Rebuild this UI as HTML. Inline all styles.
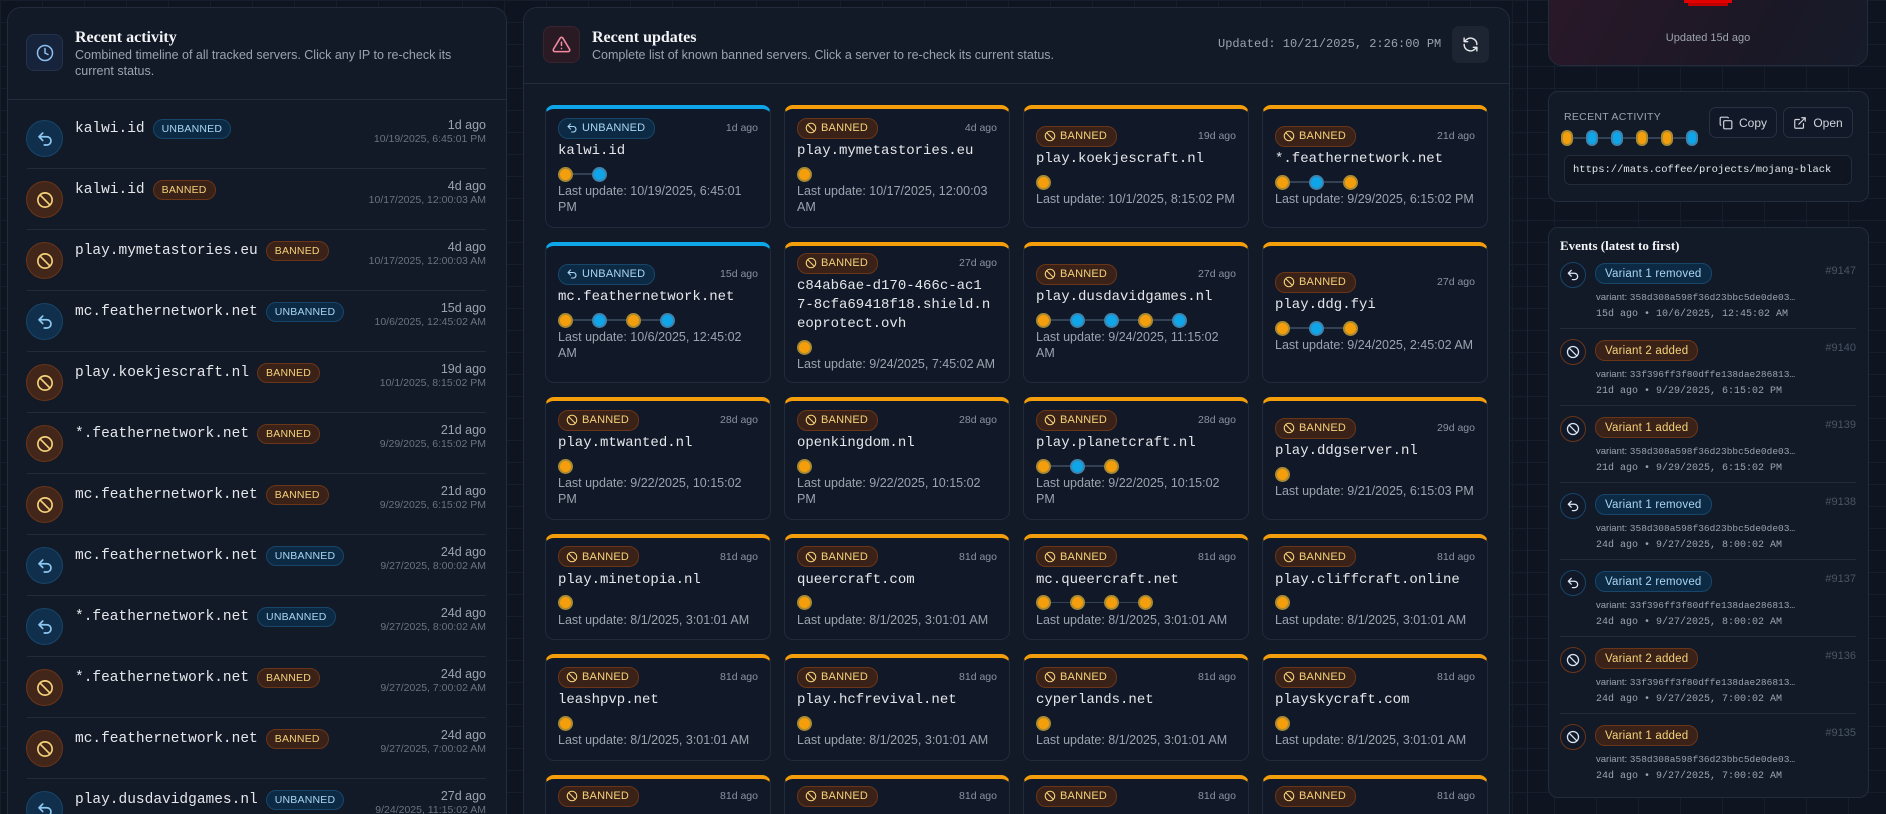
<!DOCTYPE html>
<html><head><meta charset="utf-8"><style>
*{box-sizing:border-box;margin:0;padding:0}
html{overflow:hidden;height:814px;width:1886px;background:#0e1420}
body{width:1886px;height:814px;overflow:hidden;background:#0e1420;font-family:"Liberation Sans","DejaVu Sans",sans-serif;color:#e5e7eb;position:relative;
background-image:linear-gradient(#161e2b 1px,transparent 1px),linear-gradient(90deg,#161e2b 1px,transparent 1px);background-size:42px 22px}
.panel{position:absolute;background:#121927;border:1px solid #232c3c;border-radius:14px}
.mono{font-family:"Liberation Mono","DejaVu Sans Mono",monospace}
.serif{font-family:"Liberation Serif","DejaVu Serif",serif;font-weight:bold}
.hbox{position:absolute;width:37px;height:37px;border-radius:8px;display:flex;align-items:center;justify-content:center}
.htitle{position:absolute;font-size:16px;color:#f3f4f6}
.hdesc{position:absolute;font-size:12.5px;color:#9ca3af;line-height:16px}
.lrow{position:absolute;left:27px;width:459px;height:61px;border-bottom:1px solid #222b3b}
.lrow .ic{position:absolute;left:-1px;top:12px;width:37px;height:37px;border-radius:50%;display:flex;align-items:center;justify-content:center}
.ic.u{background:#0f2f4c;border:1px solid #17466a}
.ic.b{background:#42261a;border:1px solid #6b3518}
.lrow .nm{position:absolute;left:48px;top:11px;font-size:14.5px;color:#e5e7eb;display:flex;align-items:center;white-space:nowrap}
.pill{display:inline-flex;align-items:center;height:20px;padding:0 8px;border-radius:10px;font-size:10.5px;margin-left:8px;letter-spacing:.2px;font-family:"Liberation Sans",sans-serif}
.pill.u{background:#0c2a44;border:1px solid #17466a;color:#a9d6f5}
.pill.b{background:#3a2218;border:1px solid #6b3518;color:#f5d27a}
.lrow .tm{position:absolute;right:0;top:10px;text-align:right}
.tm .a{font-size:12.5px;color:#9ca3af;line-height:15px}
.tm .d{font-size:10.5px;color:#6b7280;line-height:13px}
.grid{position:absolute;left:545px;top:105px;width:944px;display:grid;grid-template-columns:repeat(4,226px);column-gap:13px;row-gap:14px;grid-template-rows:123px 141px 123px 106px 107px 60px}
.card{background:#111827;border:1px solid #222b3b;border-top:4px solid #f59e0b;border-radius:9px;padding:4px 12px 8px;display:flex;flex-direction:column;justify-content:center;position:relative;overflow:hidden}
.card.u{border-top-color:#0ea5e9}
.card .top{display:flex;justify-content:space-between;align-items:center;height:22px}
.card .top .pill{margin-left:0;font-size:11px;padding:0 9px 0 7px;gap:4px;height:21px}
.card .ago{font-size:10.5px;color:#8b93a1}
.card .nm{font-size:14px;color:#e5e7eb;margin-top:3px;line-height:19px;white-space:nowrap}
.dots{display:flex;align-items:center;height:16px;margin-top:5px}
.dot{width:15px;height:15px;border-radius:50%;border:2px solid #a88a35;background:#f59e0b}
.dot.bl{border-color:#3f83ad;background:#0ea5e9}
.ln{width:19px;height:1.5px;background:#334155}
.card .lu{font-size:12.5px;color:#9ca3af;line-height:16px;margin-top:1px;white-space:nowrap}
.ev{position:absolute;left:1560px;width:296px;height:77px;border-bottom:1px solid #222b3b}
.ev .ic{position:absolute;left:0;top:10px;width:26px;height:26px;border-radius:50%;display:flex;align-items:center;justify-content:center;background:#111827}
.ev .ic.u{border:1px solid #17466a;background:#111827}
.ev .ic.b{border:1px solid #6b3518;background:#111827}
.ev .pl{position:absolute;left:35px;top:11px}
.ev .pl .pill{margin:0;font-size:11.5px;height:21px;padding:0 9px}
.ev .no{position:absolute;right:0;top:13px;font-size:11px;color:#4b5563}
.ev .v{position:absolute;left:36px;top:40px;font-size:9.5px;color:#9ca3af;white-space:nowrap}
.ev .t{position:absolute;left:36px;top:57px;font-size:10px;color:#9ca3af;white-space:nowrap}
</style></head><body>

<div class="panel" style="left:7px;top:7px;width:500px;height:900px"></div>
<div class="hbox" style="left:26px;top:34px;background:#17233a;border:1px solid #24324c">
<svg width="18" height="18" viewBox="0 0 24 24" fill="none" stroke="#8cc0f0" stroke-width="2" stroke-linecap="round"><circle cx="12" cy="12" r="10"/><path d="M12 6v6l4 2"/></svg></div>
<div class="htitle serif" style="left:75px;top:29px">Recent activity</div>
<div class="hdesc" style="left:75px;top:47px">Combined timeline of all tracked servers. Click any IP to re-check its<br>current status.</div>
<div style="position:absolute;left:7px;top:99px;width:500px;height:1px;background:#232c3c"></div>

<svg width="0" height="0" style="position:absolute"><defs>
<symbol id="undo" viewBox="0 0 24 24"><path d="M9 14 4 9l5-5M4 9h10.5a5.5 5.5 0 0 1 0 11H11" fill="none" stroke="currentColor" stroke-width="2.2" stroke-linecap="round" stroke-linejoin="round"/></symbol>
<symbol id="ban" viewBox="0 0 24 24"><circle cx="12" cy="12" r="9.5" fill="none" stroke="currentColor" stroke-width="2.2"/><path d="M5.3 5.3l13.4 13.4" stroke="currentColor" stroke-width="2.2"/></symbol>
</defs></svg>

<div class="lrow" style="top:108px"><div class="ic u"><svg width="18" height="18" style="color:#8cc8f0"><use href="#undo"/></svg></div><div class="nm mono">kalwi.id<span class="pill u">UNBANNED</span></div><div class="tm"><div class="a">1d ago</div><div class="d">10/19/2025, 6:45:01 PM</div></div></div>
<div class="lrow" style="top:169px"><div class="ic b"><svg width="18" height="18" style="color:#f5d27a"><use href="#ban"/></svg></div><div class="nm mono">kalwi.id<span class="pill b">BANNED</span></div><div class="tm"><div class="a">4d ago</div><div class="d">10/17/2025, 12:00:03 AM</div></div></div>
<div class="lrow" style="top:230px"><div class="ic b"><svg width="18" height="18" style="color:#f5d27a"><use href="#ban"/></svg></div><div class="nm mono">play.mymetastories.eu<span class="pill b">BANNED</span></div><div class="tm"><div class="a">4d ago</div><div class="d">10/17/2025, 12:00:03 AM</div></div></div>
<div class="lrow" style="top:291px"><div class="ic u"><svg width="18" height="18" style="color:#8cc8f0"><use href="#undo"/></svg></div><div class="nm mono">mc.feathernetwork.net<span class="pill u">UNBANNED</span></div><div class="tm"><div class="a">15d ago</div><div class="d">10/6/2025, 12:45:02 AM</div></div></div>
<div class="lrow" style="top:352px"><div class="ic b"><svg width="18" height="18" style="color:#f5d27a"><use href="#ban"/></svg></div><div class="nm mono">play.koekjescraft.nl<span class="pill b">BANNED</span></div><div class="tm"><div class="a">19d ago</div><div class="d">10/1/2025, 8:15:02 PM</div></div></div>
<div class="lrow" style="top:413px"><div class="ic b"><svg width="18" height="18" style="color:#f5d27a"><use href="#ban"/></svg></div><div class="nm mono">*.feathernetwork.net<span class="pill b">BANNED</span></div><div class="tm"><div class="a">21d ago</div><div class="d">9/29/2025, 6:15:02 PM</div></div></div>
<div class="lrow" style="top:474px"><div class="ic b"><svg width="18" height="18" style="color:#f5d27a"><use href="#ban"/></svg></div><div class="nm mono">mc.feathernetwork.net<span class="pill b">BANNED</span></div><div class="tm"><div class="a">21d ago</div><div class="d">9/29/2025, 6:15:02 PM</div></div></div>
<div class="lrow" style="top:535px"><div class="ic u"><svg width="18" height="18" style="color:#8cc8f0"><use href="#undo"/></svg></div><div class="nm mono">mc.feathernetwork.net<span class="pill u">UNBANNED</span></div><div class="tm"><div class="a">24d ago</div><div class="d">9/27/2025, 8:00:02 AM</div></div></div>
<div class="lrow" style="top:596px"><div class="ic u"><svg width="18" height="18" style="color:#8cc8f0"><use href="#undo"/></svg></div><div class="nm mono">*.feathernetwork.net<span class="pill u">UNBANNED</span></div><div class="tm"><div class="a">24d ago</div><div class="d">9/27/2025, 8:00:02 AM</div></div></div>
<div class="lrow" style="top:657px"><div class="ic b"><svg width="18" height="18" style="color:#f5d27a"><use href="#ban"/></svg></div><div class="nm mono">*.feathernetwork.net<span class="pill b">BANNED</span></div><div class="tm"><div class="a">24d ago</div><div class="d">9/27/2025, 7:00:02 AM</div></div></div>
<div class="lrow" style="top:718px"><div class="ic b"><svg width="18" height="18" style="color:#f5d27a"><use href="#ban"/></svg></div><div class="nm mono">mc.feathernetwork.net<span class="pill b">BANNED</span></div><div class="tm"><div class="a">24d ago</div><div class="d">9/27/2025, 7:00:02 AM</div></div></div>
<div class="lrow" style="top:779px;border-bottom:none"><div class="ic u"><svg width="18" height="18" style="color:#8cc8f0"><use href="#undo"/></svg></div><div class="nm mono">play.dusdavidgames.nl<span class="pill u">UNBANNED</span></div><div class="tm"><div class="a">27d ago</div><div class="d">9/24/2025, 11:15:02 AM</div></div></div>

<div class="panel" style="left:523px;top:7px;width:987px;height:900px"></div>
<div class="hbox" style="left:543px;top:26px;background:#2a1a24;border:1px solid #3a2430">
<svg width="19" height="19" viewBox="0 0 24 24" fill="none" stroke="#f38ba0" stroke-width="2" stroke-linecap="round" stroke-linejoin="round"><path d="M10.3 3.9 1.8 18a2 2 0 0 0 1.7 3h17a2 2 0 0 0 1.7-3L13.7 3.9a2 2 0 0 0-3.4 0z"/><path d="M12 9v4M12 17h.01"/></svg></div>
<div class="htitle serif" style="left:592px;top:29px">Recent updates</div>
<div class="hdesc" style="left:592px;top:47px">Complete list of known banned servers. Click a server to re-check its current status.</div>
<div class="mono" style="position:absolute;left:1218px;top:37px;font-size:12px;color:#9ca3af">Updated: 10/21/2025, 2:26:00 PM</div>
<div style="position:absolute;left:1452px;top:26px;width:37px;height:37px;border-radius:7px;background:#1d2533;display:flex;align-items:center;justify-content:center">
<svg width="17" height="17" viewBox="0 0 24 24" fill="none" stroke="#e5e7eb" stroke-width="2" stroke-linecap="round" stroke-linejoin="round"><path d="M21 12a9 9 0 0 0-15-6.7L3 8M3 3v5h5M3 12a9 9 0 0 0 15 6.7l3-2.7M21 21v-5h-5"/></svg></div>
<div style="position:absolute;left:523px;top:83px;width:987px;height:1px;background:#232c3c"></div>

<div class="grid">
<div class="card u"><div class="top"><span class="pill u"><svg width="12" height="12" style="color:#a9d6f5"><use href="#undo"/></svg>UNBANNED</span><span class="ago">1d ago</span></div><div class="nm mono">kalwi.id</div><div class="dots"><span class="dot"></span><span class="ln"></span><span class="dot bl"></span></div><div class="lu">Last update: 10/19/2025, 6:45:01<br>PM</div></div>
<div class="card"><div class="top"><span class="pill b"><svg width="12" height="12" style="color:#f5d27a"><use href="#ban"/></svg>BANNED</span><span class="ago">4d ago</span></div><div class="nm mono">play.mymetastories.eu</div><div class="dots"><span class="dot"></span></div><div class="lu">Last update: 10/17/2025, 12:00:03<br>AM</div></div>
<div class="card"><div class="top"><span class="pill b"><svg width="12" height="12" style="color:#f5d27a"><use href="#ban"/></svg>BANNED</span><span class="ago">19d ago</span></div><div class="nm mono">play.koekjescraft.nl</div><div class="dots"><span class="dot"></span></div><div class="lu">Last update: 10/1/2025, 8:15:02 PM</div></div>
<div class="card"><div class="top"><span class="pill b"><svg width="12" height="12" style="color:#f5d27a"><use href="#ban"/></svg>BANNED</span><span class="ago">21d ago</span></div><div class="nm mono">*.feathernetwork.net</div><div class="dots"><span class="dot"></span><span class="ln"></span><span class="dot bl"></span><span class="ln"></span><span class="dot"></span></div><div class="lu">Last update: 9/29/2025, 6:15:02 PM</div></div>
<div class="card u"><div class="top"><span class="pill u"><svg width="12" height="12" style="color:#a9d6f5"><use href="#undo"/></svg>UNBANNED</span><span class="ago">15d ago</span></div><div class="nm mono">mc.feathernetwork.net</div><div class="dots"><span class="dot"></span><span class="ln"></span><span class="dot bl"></span><span class="ln"></span><span class="dot"></span><span class="ln"></span><span class="dot bl"></span></div><div class="lu">Last update: 10/6/2025, 12:45:02<br>AM</div></div>
<div class="card"><div class="top"><span class="pill b"><svg width="12" height="12" style="color:#f5d27a"><use href="#ban"/></svg>BANNED</span><span class="ago">27d ago</span></div><div class="nm mono">c84ab6ae-d170-466c-ac1<br>7-8cfa69418f18.shield.n<br>eoprotect.ovh</div><div class="dots"><span class="dot"></span></div><div class="lu">Last update: 9/24/2025, 7:45:02 AM</div></div>
<div class="card"><div class="top"><span class="pill b"><svg width="12" height="12" style="color:#f5d27a"><use href="#ban"/></svg>BANNED</span><span class="ago">27d ago</span></div><div class="nm mono">play.dusdavidgames.nl</div><div class="dots"><span class="dot"></span><span class="ln"></span><span class="dot bl"></span><span class="ln"></span><span class="dot bl"></span><span class="ln"></span><span class="dot"></span><span class="ln"></span><span class="dot bl"></span></div><div class="lu">Last update: 9/24/2025, 11:15:02<br>AM</div></div>
<div class="card"><div class="top"><span class="pill b"><svg width="12" height="12" style="color:#f5d27a"><use href="#ban"/></svg>BANNED</span><span class="ago">27d ago</span></div><div class="nm mono">play.ddg.fyi</div><div class="dots"><span class="dot"></span><span class="ln"></span><span class="dot bl"></span><span class="ln"></span><span class="dot"></span></div><div class="lu">Last update: 9/24/2025, 2:45:02 AM</div></div>
<div class="card"><div class="top"><span class="pill b"><svg width="12" height="12" style="color:#f5d27a"><use href="#ban"/></svg>BANNED</span><span class="ago">28d ago</span></div><div class="nm mono">play.mtwanted.nl</div><div class="dots"><span class="dot"></span></div><div class="lu">Last update: 9/22/2025, 10:15:02<br>PM</div></div>
<div class="card"><div class="top"><span class="pill b"><svg width="12" height="12" style="color:#f5d27a"><use href="#ban"/></svg>BANNED</span><span class="ago">28d ago</span></div><div class="nm mono">openkingdom.nl</div><div class="dots"><span class="dot"></span></div><div class="lu">Last update: 9/22/2025, 10:15:02<br>PM</div></div>
<div class="card"><div class="top"><span class="pill b"><svg width="12" height="12" style="color:#f5d27a"><use href="#ban"/></svg>BANNED</span><span class="ago">28d ago</span></div><div class="nm mono">play.planetcraft.nl</div><div class="dots"><span class="dot"></span><span class="ln"></span><span class="dot bl"></span><span class="ln"></span><span class="dot"></span></div><div class="lu">Last update: 9/22/2025, 10:15:02<br>PM</div></div>
<div class="card"><div class="top"><span class="pill b"><svg width="12" height="12" style="color:#f5d27a"><use href="#ban"/></svg>BANNED</span><span class="ago">29d ago</span></div><div class="nm mono">play.ddgserver.nl</div><div class="dots"><span class="dot"></span></div><div class="lu">Last update: 9/21/2025, 6:15:03 PM</div></div>
<div class="card"><div class="top"><span class="pill b"><svg width="12" height="12" style="color:#f5d27a"><use href="#ban"/></svg>BANNED</span><span class="ago">81d ago</span></div><div class="nm mono">play.minetopia.nl</div><div class="dots"><span class="dot"></span></div><div class="lu">Last update: 8/1/2025, 3:01:01 AM</div></div>
<div class="card"><div class="top"><span class="pill b"><svg width="12" height="12" style="color:#f5d27a"><use href="#ban"/></svg>BANNED</span><span class="ago">81d ago</span></div><div class="nm mono">queercraft.com</div><div class="dots"><span class="dot"></span></div><div class="lu">Last update: 8/1/2025, 3:01:01 AM</div></div>
<div class="card"><div class="top"><span class="pill b"><svg width="12" height="12" style="color:#f5d27a"><use href="#ban"/></svg>BANNED</span><span class="ago">81d ago</span></div><div class="nm mono">mc.queercraft.net</div><div class="dots"><span class="dot"></span><span class="ln"></span><span class="dot"></span><span class="ln"></span><span class="dot"></span><span class="ln"></span><span class="dot"></span></div><div class="lu">Last update: 8/1/2025, 3:01:01 AM</div></div>
<div class="card"><div class="top"><span class="pill b"><svg width="12" height="12" style="color:#f5d27a"><use href="#ban"/></svg>BANNED</span><span class="ago">81d ago</span></div><div class="nm mono">play.cliffcraft.online</div><div class="dots"><span class="dot"></span></div><div class="lu">Last update: 8/1/2025, 3:01:01 AM</div></div>
<div class="card"><div class="top"><span class="pill b"><svg width="12" height="12" style="color:#f5d27a"><use href="#ban"/></svg>BANNED</span><span class="ago">81d ago</span></div><div class="nm mono">leashpvp.net</div><div class="dots"><span class="dot"></span></div><div class="lu">Last update: 8/1/2025, 3:01:01 AM</div></div>
<div class="card"><div class="top"><span class="pill b"><svg width="12" height="12" style="color:#f5d27a"><use href="#ban"/></svg>BANNED</span><span class="ago">81d ago</span></div><div class="nm mono">play.hcfrevival.net</div><div class="dots"><span class="dot"></span></div><div class="lu">Last update: 8/1/2025, 3:01:01 AM</div></div>
<div class="card"><div class="top"><span class="pill b"><svg width="12" height="12" style="color:#f5d27a"><use href="#ban"/></svg>BANNED</span><span class="ago">81d ago</span></div><div class="nm mono">cyperlands.net</div><div class="dots"><span class="dot"></span></div><div class="lu">Last update: 8/1/2025, 3:01:01 AM</div></div>
<div class="card"><div class="top"><span class="pill b"><svg width="12" height="12" style="color:#f5d27a"><use href="#ban"/></svg>BANNED</span><span class="ago">81d ago</span></div><div class="nm mono">playskycraft.com</div><div class="dots"><span class="dot"></span></div><div class="lu">Last update: 8/1/2025, 3:01:01 AM</div></div>
<div class="card" style="justify-content:flex-start;padding-top:6px"><div class="top"><span class="pill b"><svg width="12" height="12" style="color:#f5d27a"><use href="#ban"/></svg>BANNED</span><span class="ago">81d ago</span></div></div>
<div class="card" style="justify-content:flex-start;padding-top:6px"><div class="top"><span class="pill b"><svg width="12" height="12" style="color:#f5d27a"><use href="#ban"/></svg>BANNED</span><span class="ago">81d ago</span></div></div>
<div class="card" style="justify-content:flex-start;padding-top:6px"><div class="top"><span class="pill b"><svg width="12" height="12" style="color:#f5d27a"><use href="#ban"/></svg>BANNED</span><span class="ago">81d ago</span></div></div>
<div class="card" style="justify-content:flex-start;padding-top:6px"><div class="top"><span class="pill b"><svg width="12" height="12" style="color:#f5d27a"><use href="#ban"/></svg>BANNED</span><span class="ago">81d ago</span></div></div>
</div>

<div style="position:absolute;left:1527px;top:0;width:1px;height:814px;background:#1d2533"></div>
<div class="panel" style="left:1548px;top:-20px;width:320px;height:86px;background:linear-gradient(120deg,#2a1828,#1a1826 70%,#161c2a)"></div>
<div style="position:absolute;left:1684px;top:0;width:48px;height:3px;background:#e00000"></div>
<div style="position:absolute;left:1688px;top:3px;width:40px;height:3px;background:#c00000"></div>
<div style="position:absolute;left:1548px;top:32px;width:320px;text-align:center;font-size:11px;color:#9ca3af">Updated 15d ago</div>

<div class="panel" style="left:1548px;top:91px;width:321px;height:111px;border-radius:10px"></div>
<div style="position:absolute;left:1564px;top:111px;font-size:10.5px;color:#9ca3af;letter-spacing:.3px">RECENT ACTIVITY</div>
<div style="position:absolute;left:1561px;top:130px;display:flex;align-items:center">
<span style="width:12px;height:16px;border-radius:6px;border:2px solid #a88a35;background:#f59e0b"></span><span style="width:13px;height:1.5px;background:#334155"></span>
<span style="width:12px;height:16px;border-radius:6px;border:2px solid #3f83ad;background:#0ea5e9"></span><span style="width:13px;height:1.5px;background:#334155"></span>
<span style="width:12px;height:16px;border-radius:6px;border:2px solid #3f83ad;background:#0ea5e9"></span><span style="width:13px;height:1.5px;background:#334155"></span>
<span style="width:12px;height:16px;border-radius:6px;border:2px solid #a88a35;background:#f59e0b"></span><span style="width:13px;height:1.5px;background:#334155"></span>
<span style="width:12px;height:16px;border-radius:6px;border:2px solid #a88a35;background:#f59e0b"></span><span style="width:13px;height:1.5px;background:#334155"></span>
<span style="width:12px;height:16px;border-radius:6px;border:2px solid #3f83ad;background:#0ea5e9"></span></div>
<div style="position:absolute;left:1709px;top:107px;width:68px;height:31px;border:1px solid #273142;border-radius:7px;background:#111827;display:flex;align-items:center;justify-content:center;gap:6px;font-size:12px;color:#d1d5db">
<svg width="14" height="14" viewBox="0 0 24 24" fill="none" stroke="#d1d5db" stroke-width="2"><rect x="8" y="8" width="14" height="14" rx="2"/><path d="M4 16c-1.1 0-2-.9-2-2V4c0-1.1.9-2 2-2h10c1.1 0 2 .9 2 2"/></svg>Copy</div>
<div style="position:absolute;left:1783px;top:107px;width:70px;height:31px;border:1px solid #273142;border-radius:7px;background:#111827;display:flex;align-items:center;justify-content:center;gap:6px;font-size:12px;color:#d1d5db">
<svg width="14" height="14" viewBox="0 0 24 24" fill="none" stroke="#d1d5db" stroke-width="2" stroke-linecap="round" stroke-linejoin="round"><path d="M15 3h6v6M10 14 21 3M18 13v6a2 2 0 0 1-2 2H5a2 2 0 0 1-2-2V8a2 2 0 0 1 2-2h6"/></svg>Open</div>
<div class="mono" style="position:absolute;left:1564px;top:155px;width:288px;height:30px;border:1px solid #232c3c;border-radius:6px;background:#0f1521;font-size:10.5px;color:#e5e7eb;padding:8px 0 0 8px;white-space:nowrap;overflow:hidden">https://mats.coffee/projects/mojang-black</div>

<div class="panel" style="left:1548px;top:227px;width:321px;height:571px;border-radius:10px"></div>
<div class="serif" style="position:absolute;left:1560px;top:238px;font-size:13px;color:#f3f4f6">Events (latest to first)</div>

<div class="ev" style="top:252px"><div class="ic u"><svg width="14" height="14" style="color:#dbe7f3"><use href="#undo"/></svg></div><div class="pl"><span class="pill u">Variant 1 removed</span></div><div class="no">#9147</div><div class="v">variant: <span class="mono">358d308a598f36d23bbc5de0de03…</span></div><div class="t mono">15d ago • 10/6/2025, 12:45:02 AM</div></div>
<div class="ev" style="top:329px"><div class="ic b"><svg width="14" height="14" style="color:#dbe7f3"><use href="#ban"/></svg></div><div class="pl"><span class="pill b">Variant 2 added</span></div><div class="no">#9140</div><div class="v">variant: <span class="mono">33f396ff3f80dffe138dae286813…</span></div><div class="t mono">21d ago • 9/29/2025, 6:15:02 PM</div></div>
<div class="ev" style="top:406px"><div class="ic b"><svg width="14" height="14" style="color:#dbe7f3"><use href="#ban"/></svg></div><div class="pl"><span class="pill b">Variant 1 added</span></div><div class="no">#9139</div><div class="v">variant: <span class="mono">358d308a598f36d23bbc5de0de03…</span></div><div class="t mono">21d ago • 9/29/2025, 6:15:02 PM</div></div>
<div class="ev" style="top:483px"><div class="ic u"><svg width="14" height="14" style="color:#dbe7f3"><use href="#undo"/></svg></div><div class="pl"><span class="pill u">Variant 1 removed</span></div><div class="no">#9138</div><div class="v">variant: <span class="mono">358d308a598f36d23bbc5de0de03…</span></div><div class="t mono">24d ago • 9/27/2025, 8:00:02 AM</div></div>
<div class="ev" style="top:560px"><div class="ic u"><svg width="14" height="14" style="color:#dbe7f3"><use href="#undo"/></svg></div><div class="pl"><span class="pill u">Variant 2 removed</span></div><div class="no">#9137</div><div class="v">variant: <span class="mono">33f396ff3f80dffe138dae286813…</span></div><div class="t mono">24d ago • 9/27/2025, 8:00:02 AM</div></div>
<div class="ev" style="top:637px"><div class="ic b"><svg width="14" height="14" style="color:#dbe7f3"><use href="#ban"/></svg></div><div class="pl"><span class="pill b">Variant 2 added</span></div><div class="no">#9136</div><div class="v">variant: <span class="mono">33f396ff3f80dffe138dae286813…</span></div><div class="t mono">24d ago • 9/27/2025, 7:00:02 AM</div></div>
<div class="ev" style="top:714px;border-bottom:none"><div class="ic b"><svg width="14" height="14" style="color:#dbe7f3"><use href="#ban"/></svg></div><div class="pl"><span class="pill b">Variant 1 added</span></div><div class="no">#9135</div><div class="v">variant: <span class="mono">358d308a598f36d23bbc5de0de03…</span></div><div class="t mono">24d ago • 9/27/2025, 7:00:02 AM</div></div>
</body></html>
